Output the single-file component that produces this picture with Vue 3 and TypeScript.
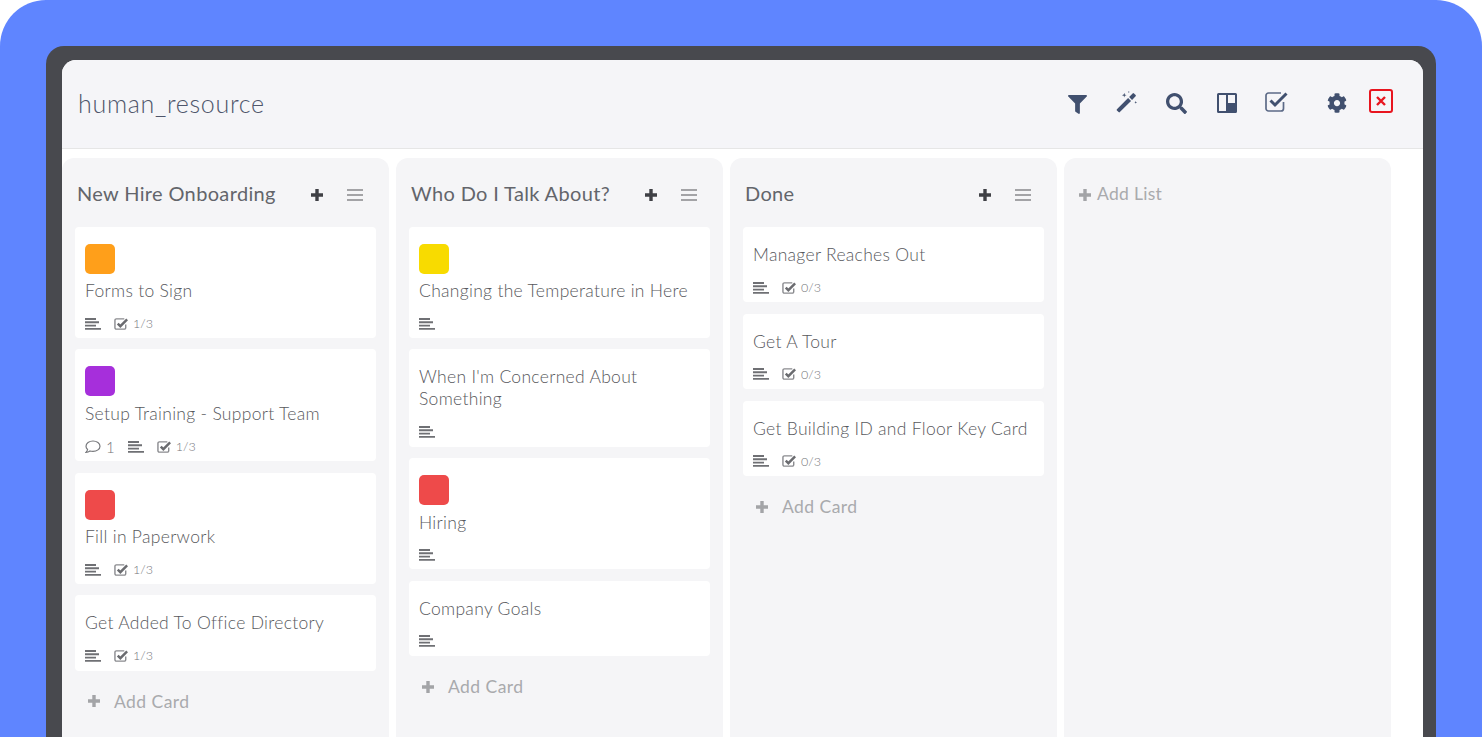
<template>
  <div class="page">
    <div class="frame">
      <div class="screen">
        <header class="topbar">
          <h1 class="board-title">human_resource</h1>
          <div class="tools">
            <svg class="tool filter" viewBox="0 0 512 512"><path :d="filterPath" /></svg>
            <svg class="tool wand" viewBox="0 0 24 24">
              <path d="M1 19.800 13.200 7.600l3.200 3.200L4.200 23a1 1 0 0 1-1.400 0L1 21.200a1 1 0 0 1 0-1.400Z" />
              <path d="M14.300 6.500 18.200 2.600a1 1 0 0 1 1.400 0l1.800 1.800a1 1 0 0 1 0 1.400L17.500 9.700Z" />
              <path d="M9 2l.6 1.900 1.900.6-1.900.6L9 7l-.6-1.900-1.900-.6 1.900-.6ZM21.500 11l.4 1.100 1.100.4-1.100.4-.4 1.100-.4-1.100-1.100-.4 1.100-.4ZM14 0l.3.8.8.3-.8.3-.3.8-.3-.8-.8-.3.8-.3Z" />
            </svg>
            <svg class="tool search" viewBox="0 0 512 512"><path :d="searchPath" /></svg>
            <svg class="tool board" viewBox="0 0 20 20">
              <path fill-rule="evenodd" d="M1.500 0h17A1.500 1.500 0 0 1 20 1.500v17a1.500 1.500 0 0 1-1.500 1.500h-17A1.500 1.500 0 0 1 0 18.500v-17A1.500 1.500 0 0 1 1.500 0ZM2 2v16h7V2Zm9 0v8h7V2Z" />
            </svg>
            <svg class="tool check" viewBox="0 0 23 21">
              <path class="check-box" d="M18.500 11v6.500a2.500 2.500 0 0 1-2.500 2.500H3.500A2.500 2.500 0 0 1 1 17.500v-13A2.500 2.500 0 0 1 3.500 2H16" />
              <path class="check-mark" d="M5.500 9.500l4.500 4.500L21.500 2.500" />
            </svg>
            <svg class="tool cog" viewBox="0 0 512 512"><path :d="cogPath" /></svg>
            <span class="close-box">
              <svg viewBox="0 0 12 12"><path d="M2 2l8 8M10 2l-8 8" /></svg>
            </span>
          </div>
        </header>

        <main class="lists">
          <section v-for="list in lists" :key="list.title" class="list">
            <div class="list-head">
              <h2 class="list-title">{{ list.title }}</h2>
              <svg class="head-plus" viewBox="0 0 14 14"><path d="M7 1v12M1 7h12" /></svg>
              <svg class="head-menu" viewBox="0 0 16 14"><path d="M0 2h16M0 7h16M0 12h16" /></svg>
            </div>

            <article v-for="card in list.cards" :key="card.title" class="card" :class="{ labelled: card.label }">
              <span v-if="card.label" class="label" :style="{ background: card.label }"></span>
              <p class="card-title">{{ card.title }}</p>
              <div class="meta">
                <span v-if="card.comments" class="meta-item comments">
                  <svg class="comment-icon" viewBox="0 0 16 14">
                    <path d="M8 1C4.100 1 1 3.300 1 6.200c0 1.300.6 2.400 1.600 3.300-.2 1-.8 2-1.600 2.800 1.500 0 2.900-.5 4-1.300.9.300 1.900.4 3 .4 3.900 0 7-2.300 7-5.200S11.900 1 8 1Z" />
                  </svg>
                  {{ card.comments }}
                </span>
                <svg class="desc-icon" viewBox="0 0 16 12"><path d="M0 1h11M0 4.300h14M0 7.600h11M0 10.900h16" /></svg>
                <span v-if="card.checks" class="meta-item">
                  <svg class="check-icon" viewBox="0 0 16 14">
                    <path class="small-box" d="M12.500 7.500V11a1.500 1.500 0 0 1-1.500 1.500H2.500A1.500 1.500 0 0 1 1 11V3a1.500 1.500 0 0 1 1.500-1.500H11" />
                    <path class="small-mark" d="M4 6.500l2.800 2.800L14 2" />
                  </svg>
                  {{ card.checks }}
                </span>
              </div>
            </article>

            <div class="add-card">
              <svg class="add-plus" viewBox="0 0 14 14"><path d="M7 1v12M1 7h12" /></svg>
              <span>Add Card</span>
            </div>
          </section>

          <section class="list add-list">
            <svg class="add-plus" viewBox="0 0 14 14"><path d="M7 1v12M1 7h12" /></svg>
            <span>Add List</span>
          </section>
        </main>
      </div>
    </div>
  </div>
</template>

<script setup lang="ts">
interface Card {
  title: string
  label?: string
  comments?: number
  checks?: string
}

interface List {
  title: string
  cards: Card[]
}

const filterPath =
  'M487.976 0H24.028C2.71 0-8.047 25.866 7.058 40.971L192 225.941V432c0 7.831 3.821 15.17 10.237 19.662l80 55.98C298.02 518.69 320 507.493 320 487.98V225.941l184.947-184.97C520.021 25.896 509.338 0 487.976 0z'
const searchPath =
  'M505 442.7L405.3 343c-4.5-4.5-10.6-7-17-7H372c27.6-35.3 44-79.7 44-128C416 93.1 322.9 0 208 0S0 93.1 0 208s93.1 208 208 208c48.3 0 92.7-16.4 128-44v16.3c0 6.4 2.5 12.5 7 17l99.7 99.7c9.4 9.4 24.6 9.4 33.9 0l28.3-28.3c9.4-9.4 9.4-24.6.1-34zM208 336c-70.7 0-128-57.2-128-128 0-70.7 57.2-128 128-128 70.7 0 128 57.2 128 128 0 70.7-57.2 128-128 128z'
const cogPath =
  'M487.4 315.7l-42.6-24.6c4.3-23.2 4.3-47 0-70.2l42.6-24.6c4.9-2.8 7.1-8.6 5.5-14-11.1-35.6-30-67.8-54.7-94.6-3.8-4.1-10-5.1-14.8-2.3L380.8 110c-17.9-15.4-38.5-27.3-60.8-35.1V25.8c0-5.6-3.9-10.5-9.4-11.7-36.7-8.2-74.3-7.8-109.2 0-5.5 1.2-9.4 6.1-9.4 11.7V75c-22.2 7.9-42.8 19.8-60.8 35.1L88.7 85.5c-4.9-2.8-11-1.9-14.8 2.3-24.7 26.7-43.6 58.9-54.7 94.6-1.7 5.4.6 11.2 5.5 14L67.3 221c-4.3 23.2-4.3 47 0 70.2l-42.6 24.6c-4.9 2.8-7.1 8.6-5.5 14 11.1 35.6 30 67.8 54.7 94.6 3.8 4.1 10 5.1 14.8 2.3l42.6-24.6c17.9 15.4 38.5 27.3 60.8 35.1v49.2c0 5.6 3.9 10.5 9.4 11.7 36.7 8.2 74.3 7.8 109.2 0 5.5-1.2 9.4-6.1 9.4-11.7v-49.2c22.2-7.9 42.8-19.8 60.8-35.1l42.6 24.6c4.9 2.8 11 1.9 14.8-2.3 24.7-26.7 43.6-58.9 54.7-94.6 1.5-5.5-.7-11.3-5.6-14.1zM256 336c-44.1 0-80-35.9-80-80s35.9-80 80-80 80 35.9 80 80-35.9 80-80 80z'

const lists: List[] = [
  {
    title: 'New Hire Onboarding',
    cards: [
      { title: 'Forms to Sign', label: '#ff9f1a', checks: '1/3' },
      { title: 'Setup Training - Support Team', label: '#a62fdb', comments: 1, checks: '1/3' },
      { title: 'Fill in Paperwork', label: '#ee4a4a', checks: '1/3' },
      { title: 'Get Added To Office Directory', checks: '1/3' },
    ],
  },
  {
    title: 'Who Do I Talk About?',
    cards: [
      { title: 'Changing the Temperature in Here', label: '#f8db00' },
      { title: "When I'm Concerned About Something" },
      { title: 'Hiring', label: '#ee4a4a' },
      { title: 'Company Goals' },
    ],
  },
  {
    title: 'Done',
    cards: [
      { title: 'Manager Reaches Out', checks: '0/3' },
      { title: 'Get A Tour', checks: '0/3' },
      { title: 'Get Building ID and Floor Key Card', checks: '0/3' },
    ],
  },
]
</script>

<style>
html,
body {
  margin: 0;
  height: 737px;
  overflow: hidden;
  background: #fff;
}
</style>

<style scoped>
.page {
  height: 737px;
  box-sizing: border-box;
  padding: 46px 46px 0;
  overflow: hidden;
  background: #5f85ff;
  border-radius: 46px 46px 0 0;
  font-family: Lato, "Noto Sans", sans-serif;
}

.frame {
  height: 100%;
  box-sizing: border-box;
  padding: 14px 13px 0 16px;
  background: #48494e;
  border-radius: 18px 18px 0 0;
}

.screen {
  height: 100%;
  overflow: hidden;
  background: #fff;
  border-radius: 14px 14px 0 0;
}

.topbar {
  display: flex;
  align-items: flex-start;
  justify-content: space-between;
  height: 89px;
  box-sizing: border-box;
  background: #f5f5f8;
  border-bottom: 1px solid #e6e6e6;
}

.board-title {
  margin: 28px 0 0 16px;
  font-size: 25px;
  line-height: 30px;
  font-weight: 300;
  letter-spacing: 0.7px;
  color: #4f566b;
}

.tools {
  display: flex;
  align-items: center;
  height: 24px;
  margin: 31px 30px 0 0;
}

.tool {
  display: block;
  fill: #41506f;
}

.filter { width: 19px; height: 19px; margin-top: 2px; }
.wand { width: 22px; height: 22px; margin-left: 29px; margin-top: -2px; }
.search { width: 21px; height: 21px; margin-left: 28px; margin-top: 1px; }
.board { width: 20px; height: 20px; margin-left: 30px; }
.check { width: 23px; height: 21px; margin-left: 28px; margin-top: -4px; fill: none; }
.check-box { fill: none; stroke: #5c6a87; stroke-width: 1.700; }
.check-mark { fill: none; stroke: #41506f; stroke-width: 3; }
.cog { width: 20px; height: 20px; margin-left: 39px; }

.close-box {
  display: flex;
  align-items: center;
  justify-content: center;
  width: 24px;
  height: 24px;
  box-sizing: border-box;
  margin-left: 22px;
  margin-top: -4px;
  border: 2.500px solid #e8151f;
  border-radius: 3px;
}

.close-box svg {
  width: 12px;
  height: 12px;
  fill: none;
  stroke: #e8151f;
  stroke-width: 2.400;
}

.lists {
  display: flex;
  align-items: flex-start;
  gap: 7px;
  padding-top: 9px;
}

.list {
  flex: none;
  width: 327px;
  height: 640px;
  box-sizing: border-box;
  padding: 0 13px;
  background: #f5f5f7;
  border-radius: 12px 12px 0 0;
}

.list-head {
  display: flex;
  align-items: center;
  height: 69px;
  padding: 0 13px 0 2px;
}

.list-title {
  flex: 1;
  margin: 0;
  font-size: 20px;
  font-weight: 400;
  letter-spacing: 0.35px;
  color: #63656b;
}

.head-plus {
  width: 14px;
  height: 14px;
  margin-top: 4px;
  fill: none;
  stroke: #3f4045;
  stroke-width: 3.400;
}

.head-menu {
  width: 16px;
  height: 14px;
  margin-top: 4px;
  margin-left: 23px;
  fill: none;
  stroke: #a3a3a6;
  stroke-width: 2.200;
}

.card {
  box-sizing: border-box;
  margin-bottom: 11.600px;
  padding: 17px 10px 6.900px;
  background: #fff;
  border-radius: 4px;
}

.card.labelled {
  padding-bottom: 5.900px;
}

.label {
  display: block;
  width: 30px;
  height: 30px;
  margin-bottom: 6.400px;
  border-radius: 5px;
}

.card-title {
  margin: 0 0 13.500px;
  font-size: 17.500px;
  line-height: 22px;
  font-weight: 300;
  letter-spacing: 0.3px;
  color: #58595d;
}

.meta {
  display: flex;
  align-items: center;
  gap: 14px;
  min-height: 16px;
  font-size: 12.500px;
  font-weight: 300;
  color: #737478;
}

.meta-item {
  display: flex;
  align-items: center;
  gap: 4px;
}

.comments {
  height: 17.200px;
  font-size: 15px;
  gap: 5px;
  margin-right: -1px;
}

.comment-icon {
  width: 16px;
  height: 14px;
  fill: none;
  stroke: #77787c;
  stroke-width: 1.200;
}

.desc-icon {
  width: 16px;
  height: 12px;
  fill: none;
  stroke: #6f7074;
  stroke-width: 1.900;
}

.check-icon {
  width: 15px;
  height: 14px;
  margin-left: -1px;
  fill: none;
}

.small-box {
  stroke: #8a8b8f;
  stroke-width: 1.500;
}

.small-mark {
  stroke: #6a6b6f;
  stroke-width: 2.600;
}

.add-card {
  display: flex;
  align-items: center;
  gap: 13px;
  margin-top: 20px;
  padding-left: 12px;
  font-size: 17.500px;
  font-weight: 400;
  letter-spacing: 0.45px;
  color: #a9aaad;
}

.add-plus {
  flex: none;
  width: 14px;
  height: 14px;
  fill: none;
  stroke: #a3a4a7;
  stroke-width: 3.400;
}

.add-list {
  display: flex;
  align-items: flex-start;
  gap: 5px;
  padding: 25px 14px 0;
  font-size: 17.500px;
  letter-spacing: 0.3px;
  color: #a9aaad;
}

.add-list .add-plus {
  margin-top: 5px;
}
</style>
